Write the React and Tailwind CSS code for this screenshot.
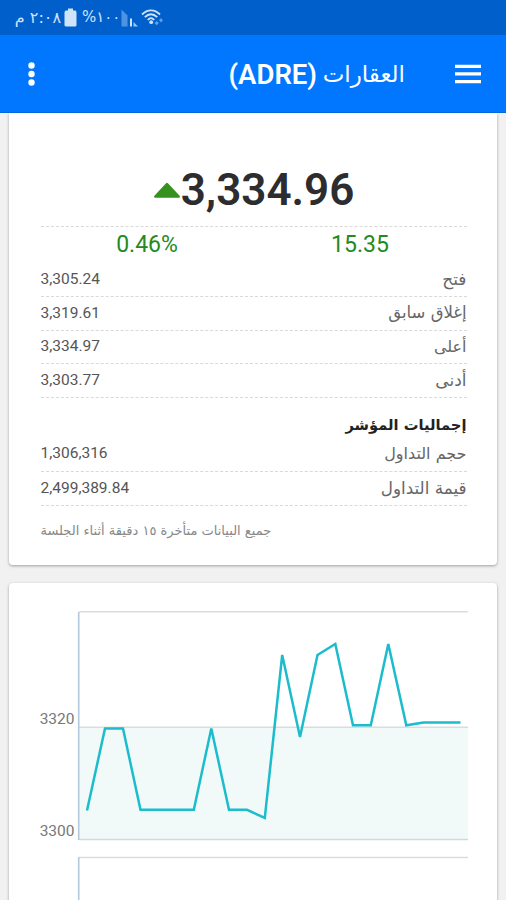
import React from "react";

const roboto = "font-['Roboto','Liberation_Sans',sans-serif]";
const arabic = "font-['DejaVu_Sans',sans-serif]";

function WifiIcon() {
  return (
    <svg className="block" width="24" height="20" viewBox="0 0 24 20" fill="none" stroke="#cfe3fb" strokeWidth="1.8">
      <path d="M1 6.500C6.500 1 13.500 1 19 6.500" />
      <path d="M3.800 9.200C8 5.200 12 5.200 16.200 9.200" />
      <path d="M6.700 12C9 9.600 11 9.600 13.300 12" />
      <circle cx="10.200" cy="14.200" r="1.900" fill="#cfe3fb" stroke="none" />
      <path d="M13.500 15l2.200-2 2.200 2-2.200 2.200z" fill="#5f9fe8" stroke="none" />
      <path d="M18 12.200l2-2.200 2 2.200-2 2.200z" fill="#5f9fe8" stroke="none" />
    </svg>
  );
}

function SignalIcon() {
  return (
    <svg className="block" width="18" height="18" viewBox="0 0 18 18">
      <path d="M.5.500l6 6v11h-6z" fill="#4c93e6" />
      <path d="M9 9.500h2v8H9z" fill="#cfe3fb" />
      <path d="M12.500 13l4.500 4.500h-4.500z" fill="#9cc5f3" />
    </svg>
  );
}

function BatteryIcon() {
  return (
    <svg className="block" width="13" height="19" viewBox="0 0 13 19" fill="#cfe3fb">
      <path d="M4 .500h5V2.500h2.500L12.500 4v13.500l-1 1h-10l-1-1V4l1-1.500H4z" />
    </svg>
  );
}

function StatusBar() {
  return (
    <div className="flex h-[35px] shrink-0 items-center bg-[#005fcb] pl-[15px] text-[#cfe3fb]">
      <div dir="rtl" className={`w-[46px] whitespace-nowrap text-[16px] leading-none ${arabic}`}>٢:٠٨ م</div>
      <div className="ml-[3px]"><BatteryIcon /></div>
      <div dir="ltr" className={`ml-[5px] w-[33px] whitespace-nowrap text-[15px] leading-none tracking-[-0.8px] ${arabic}`}>
        <bdo dir="ltr">%١٠٠</bdo>
      </div>
      <div className="ml-[6px]"><SignalIcon /></div>
      <div className="ml-[2px]"><WifiIcon /></div>
    </div>
  );
}

function AppBar() {
  return (
    <div className="flex h-[78px] shrink-0 items-center border-b border-[#0068dd] bg-[#0177ff] pl-[28px] pr-[25px] text-white">
      <svg className="block" width="7" height="24" viewBox="0 0 7 24" fill="currentColor">
        <circle cx="3.500" cy="3.500" r="3.200" />
        <circle cx="3.500" cy="12" r="3.200" />
        <circle cx="3.500" cy="20.500" r="3.200" />
      </svg>
      <div className="ml-auto flex items-center">
        <span className={`mt-[3px] text-[27.500px] font-semibold leading-8 ${roboto}`}>(ADRE)</span>
        <span dir="rtl" className={`ml-[7px] block w-[81px] whitespace-nowrap text-[23px] leading-8 ${arabic}`}>العقارات</span>
      </div>
      <svg className="ml-[50px] block" width="26" height="20" viewBox="0 0 26 20" fill="currentColor">
        <path d="M0 .700h26v3.300H0zM0 8.300h26v3.300H0zM0 15.900h26v3.300H0z" />
      </svg>
    </div>
  );
}

function Row({ label, value, className, labelSize = "text-[16px]" }) {
  return (
    <div className={`flex items-center justify-between border-b border-dashed border-[#d9d9d9] ${className}`}>
      <span className={`text-[15.500px] text-[#555] ${roboto}`}>{value}</span>
      <span dir="rtl" className={`text-[#666] ${labelSize} ${arabic}`}>{label}</span>
    </div>
  );
}

function Summary() {
  return (
    <section className="mx-[9px] flex h-[452px] shrink-0 flex-col rounded-b-[4px] bg-white pl-[31.500px] pr-[30.500px] shadow-[0_1px_3px_rgba(0,0,0,0.35)]">
      <div className="flex h-[114px] shrink-0 items-end justify-center border-b border-dashed border-[#d9d9d9] pb-[8px]">
        <svg className="mb-[18px] block" width="28" height="18" viewBox="0 0 28 18">
          <path d="M14 2.200L25.700 14.500H2.300z" fill="#36911f" stroke="#36911f" strokeWidth="2.500" strokeLinejoin="round" />
        </svg>
        <span className={`text-[44px] font-semibold leading-[56px] text-[#2d2d30] ${roboto}`}>3,334.96</span>
      </div>
      <div className={`grid h-[36px] shrink-0 grid-cols-2 items-center pt-px text-center text-[23px] text-[#258a1d] ${roboto}`}>
        <span>0.46%</span>
        <span>15.35</span>
      </div>
      <Row className="h-[34px]" value="3,305.24" label="فتح" labelSize="text-[17px]" />
      <Row className="h-[34px]" value="3,319.61" label="إغلاق سابق" labelSize="text-[16.500px]" />
      <Row className="h-[33px]" value="3,334.97" label="أعلى" />
      <Row className="h-[34px]" value="3,303.77" label="أدنى" labelSize="text-[17px]" />
      <h2 dir="rtl" className={`mt-[15px] h-[24px] text-[14.700px] font-bold leading-6 text-[#222] ${arabic}`}>إجماليات المؤشر</h2>
      <Row className="h-[35px]" value="1,306,316" label="حجم التداول" />
      <Row className="h-[34px]" value="2,499,389.84" label="قيمة التداول" labelSize="text-[16.800px]" />
      <p className="mt-[13px] text-left leading-5">
        <span dir="rtl" className={`inline-block whitespace-nowrap text-[13px] text-[#888] ${arabic}`}>جميع البيانات متأخرة ١٥ دقيقة أثناء الجلسة</span>
      </p>
    </section>
  );
}

function Chart() {
  return (
    <section className="mx-[9px] mt-[18px] h-[340px] shrink-0 rounded-t-[4px] bg-white shadow-[0_1px_3px_rgba(0,0,0,0.35)]">
      <svg className="block" width="489" height="317" viewBox="9 583 489 317">
        <rect x="79" y="728" width="389" height="111" fill="#f2faf9" />
        <g stroke="#dadddf" strokeWidth="1.500">
          <path d="M79 611.800H468M79 727.300H468M79 857.500H468" />
          <path d="M79 839.500H468" stroke="#d0dadd" />
        </g>
        <path d="M78.700 612V840M78.700 857V900" stroke="#b4c8dc" strokeWidth="1.600" />
        <g className={`text-[15.500px] ${roboto}`} fill="#777" textAnchor="end">
          <text x="74.500" y="723.500">3320</text>
          <text x="74.500" y="836">3300</text>
        </g>
        <polyline
          points="87,810.500 105,728.500 123,728.500 140.500,809.800 193.800,809.800 211.300,728.500 229,809.800 247,809.800 264.800,818 282.200,655 300,737 317.500,655 335.300,644 353,725.300 370.800,725.300 388.300,644 406.300,725.300 423.500,722.500 460.500,722.500"
          fill="none"
          stroke="#1bbccc"
          strokeWidth="2.500"
        />
      </svg>
    </section>
  );
}

export default function App() {
  return (
    <main className="flex h-[900px] w-[506px] flex-col overflow-hidden bg-[#f1f1f1]">
      <StatusBar />
      <AppBar />
      <div className="flex min-h-0 flex-1 flex-col overflow-hidden">
        <Summary />
        <Chart />
      </div>
    </main>
  );
}
